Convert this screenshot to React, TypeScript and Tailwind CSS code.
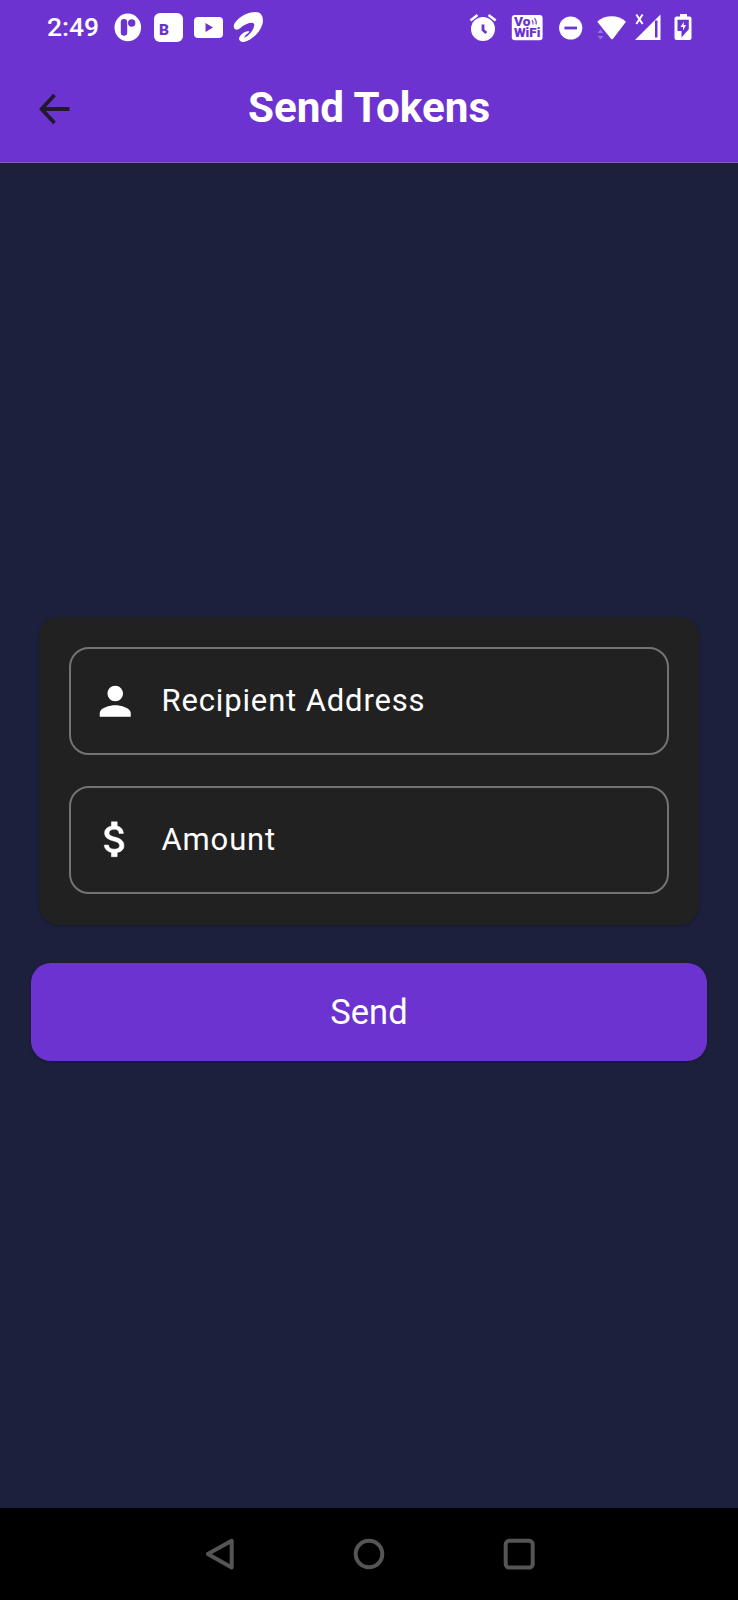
import React from "react";
import { MdPerson } from "react-icons/md";

const PURPLE = "#6c33d1";

function StatusBar() {
  return (
    <div className="flex h-[60px] shrink-0 items-start text-white">
      <span className="ml-[47px] mt-[11px] w-[66px] text-[26.5px] leading-[32px] font-medium">2:49</span>
      <svg width="152" height="34" viewBox="113 10 152 34" className="mt-[10px]" fill="white">
        <ellipse cx="127.8" cy="27.4" rx="13.3" ry="13.8" />
        <rect x="120.8" y="19" width="6.4" height="16.8" rx="3.2" fill={PURPLE} />
        <circle cx="131.7" cy="23" r="3.7" fill={PURPLE} />
        <rect x="154" y="13" width="29" height="29" rx="6" />
        <text x="159" y="35.4" fontSize="15.5" fontWeight="900" fill={PURPLE}>B</text>
        <rect x="194" y="17" width="29" height="21" rx="4" />
        <path d="M205.5 23 213 27.5 205.5 32Z" fill={PURPLE} />
        <path d="M234.8 23C239 16.500 248 12 255.500 12 261.500 12 264 17 262.500 24 260 33 251 40.500 244 42 239.500 42.300 237.800 39.500 240 36 242.500 32.500 246.500 30.700 249.500 31.300 249 33.500 244.800 34.500 244.300 37.800 249.500 35.500 254 29.500 254.300 24.800 253.500 21 247 23 241.500 27 238.500 29.800 235.500 30.500 234.300 28.500 233.300 26.700 233.700 24.700 234.800 23Z" />
      </svg>
      <svg width="230" height="34" viewBox="467 10 230 34" className="ml-auto mr-[41px] mt-[10px]" fill="white">
        <circle cx="483" cy="29" r="12" />
        <path d="M470.500 20.500 477.500 15M488.500 15 495.700 20.500" stroke="white" strokeWidth="2.6" fill="none" />
        <path d="M483 24.500V30L486.300 33" stroke={PURPLE} strokeWidth="2.8" fill="none" />

        <rect x="511.800" y="15" width="30.800" height="25.200" rx="3" />
        <text x="514" y="26.300" fontSize="12" fontWeight="900" fill={PURPLE} textLength="16.5" lengthAdjust="spacingAndGlyphs">Vo</text>
        <path d="M532 20Q533.500 22 533 24.500M534.500 18Q537 21 536 24.500" stroke={PURPLE} strokeWidth="1.1" fill="none" />
        <text x="513.900" y="37.300" fontSize="12" fontWeight="900" fill={PURPLE} textLength="26.500" lengthAdjust="spacingAndGlyphs">WiFi</text>

        <circle cx="570.700" cy="28" r="11.600" />
        <rect x="564.500" y="26.600" width="12.500" height="2.800" fill={PURPLE} />

        <path d="M597.300 21.800C605 14.500 618 14.500 626 21.800L613 38.800Q612 39.800 611 38.800Z" />
        <path d="M597.500 33 600.500 29.300 603.500 33ZM597.500 36 600.500 39.500 603.500 36Z" opacity=".3" />

        <path d="M636.300 14.500 642.600 24M642.600 14.500 636.300 24" stroke="white" strokeWidth="2" />
        <path d="M635 40 660.500 14.500V40Z" />
        <rect x="655" y="20.500" width="2.500" height="17" fill={PURPLE} />

        <path d="M680 16.500V14H687V16.500H689.500Q691.500 16.500 691.500 18.500V38Q691.500 40 689.500 40H676.500Q674.500 40 674.500 38V18.500Q674.500 16.500 676.500 16.500Z" />
        <path d="M677.500 19.800H688.800V29.300L681.500 37.500V31H677.500Z" fill={PURPLE} />
        <path d="M684 21.500 680.500 27H683V30.500L686 25H683.500Z" />
      </svg>
    </div>
  );
}

function Header() {
  return (
    <header className="grid h-[103px] shrink-0 grid-cols-[108px_1fr_108px] items-start border-b border-[#8560ba]">
      <button aria-label="Back" className="ml-[38px] mt-[33px] w-[34px]">
        <svg width="34" height="34" viewBox="0 0 34 34" fill="none" stroke="#211a2d" strokeWidth="3.8">
          <path d="M31.500 16H5M16.500 2 3.600 16 16.500 30" />
        </svg>
      </button>
      <h1 className="mt-[23px] text-center text-[42.2px] leading-[50px] font-bold text-white">Send Tokens</h1>
    </header>
  );
}

function DollarIcon() {
  return (
    <svg width="46.5" height="46.5" viewBox="0 0 24 24" className="-mt-px" fill="white" stroke="white" strokeWidth="0.25">
      <path d="M11.8 10.9c-2.27-.59-3-1.2-3-2.15 0-1.09 1.01-1.85 2.7-1.85 1.78 0 2.44.85 2.5 2.1h2.21c-.07-1.72-1.12-3.3-3.21-3.81V3h-3v2.16c-1.94.42-3.5 1.68-3.5 3.61 0 2.31 1.91 3.46 4.7 4.13 2.5.6 3 1.48 3 2.41 0 .69-.49 1.79-2.7 1.79-2.06 0-2.87-.92-2.98-2.1h-2.2c.12 2.19 1.76 3.42 3.68 3.83V21h3v-2.15c1.95-.37 3.5-1.5 3.5-3.55 0-2.84-2.43-3.81-4.7-4.4z" />
    </svg>
  );
}

function Field({ icon, label }: { icon: React.ReactNode; label: string }) {
  return (
    <label className="flex h-[108px] items-center rounded-[20px] border-2 border-[#737276] pl-[21px] text-white">
      {icon}
      <span className="ml-[23px] -mt-px text-[31px] leading-[44px] tracking-[0.85px]">{label}</span>
    </label>
  );
}

function NavigationBar() {
  return (
    <nav className="flex h-[92px] shrink-0 items-start justify-center bg-black">
      <svg width="340" height="40" viewBox="199 1534 340 40" className="mt-[26px]" fill="none" stroke="#555555" strokeWidth="4" strokeLinejoin="round">
        <path d="M207.800 1554 231.700 1540.800V1567.400Z" />
        <circle cx="369" cy="1554" r="13.300" />
        <rect x="505.700" y="1540.800" width="27" height="26.800" rx="3.500" />
      </svg>
    </nav>
  );
}

export default function App() {
  return (
    <div className="flex h-[1600px] w-[738px] flex-col bg-[#1c203c] font-[Roboto,sans-serif]">
      <div className="flex flex-col bg-[#6c33d1]">
        <StatusBar />
        <Header />
      </div>
      <main className="flex flex-1 flex-col px-[31px] pt-[454px]">
        <section className="mx-[8px] flex flex-col gap-[31px] rounded-[20px] bg-[#212121] px-[30px] pt-[30px] pb-[31px] shadow-[0_1px_3px_rgba(0,0,0,0.25)]">
          <Field icon={<MdPerson size={46.5} />} label="Recipient Address" />
          <Field icon={<DollarIcon />} label="Amount" />
        </section>
        <button className="mt-[38px] h-[98px] rounded-[20px] bg-[#6c33d1] text-[34.5px] leading-[44px] text-white shadow-[0_1px_3px_rgba(0,0,0,0.3)]">
          Send
        </button>
      </main>
      <NavigationBar />
    </div>
  );
}
